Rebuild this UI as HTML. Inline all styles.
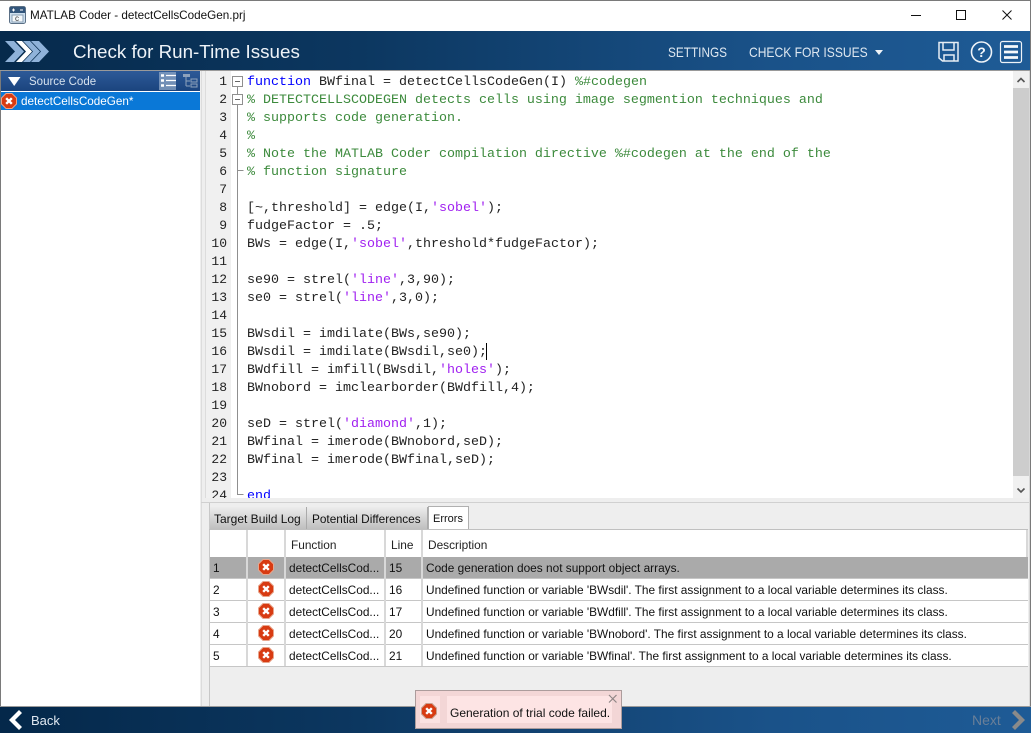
<!DOCTYPE html>
<html><head><meta charset="utf-8"><style>
html,body{margin:0;padding:0;background:#fff}
#r{position:relative;width:1031px;height:733px;overflow:hidden;background:#fff;font-family:"Liberation Sans",sans-serif;font-size:12px;color:#000}
#r div,#r svg{position:absolute}
.t{white-space:pre}
.ln{left:205px;width:22px;text-align:right;font-family:"Liberation Mono",monospace;font-size:13px;height:18px;line-height:18px;color:#222;white-space:pre;margin-top:1px}
.c{left:247px;font-family:"Liberation Mono",monospace;font-size:13.33px;height:18px;line-height:18px;white-space:pre;color:#222;margin-top:2px}
.k{color:#0000ff}.g{color:#3c8a3c}.s{color:#a020f0}
.cell{white-space:pre;height:22px;line-height:22px;font-size:11.86px;color:#111}
.hl{background:#c6c6c6;height:1px}
.v{background:#d8d8d8;width:2px}
</style></head><body><div id="r">
<!-- title bar -->
<div style="left:0;top:0;width:1031px;height:1px;background:#7a7a7a"></div>
<svg style="left:9px;top:6px" width="17" height="18" viewBox="0 0 17 18"><rect x=".5" y=".5" width="16" height="17" rx="2" fill="#cfe0ef" stroke="#5a6f85"/><rect x="1" y="1" width="15" height="6" fill="#33567c"/><path d="M3 4h3M4.500 2.500v3M11 4h3" stroke="#fff" stroke-width="1"/><rect x="3" y="9" width="11" height="7" fill="#f4f8fb" stroke="#8aa0b5"/><text x="6" y="15" font-size="8" font-family="Liberation Sans" fill="#333">c</text></svg>
<div class="t" style="left:30px;top:8px;font-size:11.7px;line-height:16px;color:#111">MATLAB Coder - detectCellsCodeGen.prj</div>
<svg style="left:905px;top:8px" width="120" height="16" viewBox="0 0 120 16"><path d="M6 7.500h10" stroke="#111" stroke-width="1"/><rect x="51.500" y="2.500" width="9" height="9" fill="none" stroke="#111"/><path d="M97.500 2.500l9 9M106.500 2.500l-9 9" stroke="#111" stroke-width="1"/></svg>
<!-- header -->
<div style="left:0;top:31px;width:1031px;height:39px;background:linear-gradient(90deg,#062a4c 0%,#0c3760 35%,#1a5289 75%,#1e5b96 100%)"></div>
<div style="left:0;top:70px;width:1031px;height:1px;background:#9a9a9a"></div>
<svg style="left:5px;top:40px" width="45" height="23" viewBox="0 0 45 23"><path d="M0 1h9l10 10.500L9 22H0l10-10.500z" fill="#8fb2d9"/><path d="M11 1h6l10 10.500L17 22h-6l10-10.500z" fill="#fff"/><path d="M18 1h7l10 10.500L25 22h-7l10-10.500z" fill="#8fb2d9"/><path d="M26 1h8l10 10.500L34 22h-8l10-10.500z" fill="#8fb2d9"/></svg>
<div class="t" style="left:73px;top:40px;font-size:18.8px;line-height:24px;color:#eef3f8">Check for Run-Time Issues</div>
<div class="t" style="left:668px;top:44px;font-size:14px;line-height:17px;color:#dfe8f1;transform:scaleX(.843);transform-origin:left">SETTINGS</div>
<div class="t" style="left:749px;top:44px;font-size:14px;line-height:17px;color:#dfe8f1;transform:scaleX(.862);transform-origin:left">CHECK FOR ISSUES</div>
<svg style="left:875px;top:50px" width="8" height="5" viewBox="0 0 8 5"><path d="M0 0h8L4 5z" fill="#eef3f8"/></svg>
<svg style="left:937px;top:40px" width="86" height="24" viewBox="0 0 86 24"><path d="M2 2.500h19v18.500H5.500L2 18z" fill="none" stroke="#e6edf4" stroke-width="1.500"/><path d="M6 3v7h11V3M7 21v-6h10v6" fill="none" stroke="#e6edf4" stroke-width="1.500"/><circle cx="44.500" cy="12" r="10" fill="none" stroke="#eef3f8" stroke-width="1.600"/><text x="44.500" y="17" text-anchor="middle" font-family="Liberation Sans" font-weight="bold" font-size="14" fill="#f2f6fa">?</text><rect x="63.500" y="1.500" width="21" height="21" rx="2" fill="none" stroke="#eef3f8" stroke-width="1.200"/><path d="M67 6.500h14M67 12h14M67 17.500h14" stroke="#f6f9fb" stroke-width="2.800"/></svg>
<!-- window borders -->
<div style="left:0;top:71px;width:1px;height:636px;background:#7a7a7a"></div>
<!-- left panel -->
<div style="left:1px;top:71px;width:200px;height:20px;background:linear-gradient(180deg,#2d5a98,#1b447e)"></div>
<svg style="left:8px;top:77px" width="13" height="9" viewBox="0 0 13 9"><path d="M0 0h12.500L6.200 9z" fill="#fff"/></svg>
<div class="t" style="left:29px;top:75px;line-height:15px;font-size:11.5px;color:#d7e2ee">Source Code</div>
<div style="left:159px;top:72px;width:17px;height:18px;background:#8ea6c6;opacity:.75"></div>
<svg style="left:160px;top:73px" width="17" height="16" viewBox="0 0 17 16"><path d="M1 2.500h3M1 7.500h3M1 12.500h3" stroke="#fff" stroke-width="2.500"/><path d="M6 2.500h10M6 7.500h10M6 12.500h10" stroke="#fff" stroke-width="1.200"/></svg>
<svg style="left:183px;top:73px" width="15" height="16" viewBox="0 0 15 16"><path d="M0 1h7v3H0z" fill="#8ea2bc"/><path d="M3 4v9M3 8h4M3 13h4" stroke="#8ea2bc"/><rect x="8" y="6" width="6" height="3" fill="none" stroke="#8ea2bc"/><rect x="8" y="11" width="6" height="3" fill="none" stroke="#8ea2bc"/></svg>
<div style="left:1px;top:92px;width:199px;height:18px;background:#0a78d7"></div>
<svg style="left:1px;top:93px" width="16" height="16" viewBox="0 0 16 16"><path d="M5 .5h6L15.500 5v6L11 15.500H5L.5 11V5z" fill="#d83b12" stroke="#f2a184"/><path d="M5.200 5.200l5.600 5.600M10.800 5.200l-5.600 5.600" stroke="#fff" stroke-width="2.400"/></svg>
<div class="t" style="left:21px;top:94px;line-height:16px;font-size:11.7px;color:#fff">detectCellsCodeGen*</div>
<!-- splitter -->
<div style="left:200px;top:71px;width:10px;height:636px;background:#eeeeee"></div>
<div style="left:201px;top:71px;width:1px;height:636px;background:#dcdcdc"></div>
<div style="left:205px;top:71px;width:1px;height:427px;background:#dcdcdc"></div>
<!-- editor -->
<div style="left:206px;top:71px;width:25px;height:427px;background:#f0f0f0"></div>
<div style="left:231px;top:71px;width:782px;height:427px;background:#fff;overflow:hidden"></div>
<div style="left:1013px;top:71px;width:16px;height:427px;background:#f0f0f0"></div>
<div style="left:1013px;top:88px;width:16px;height:388px;background:#cdcdcd"></div>
<svg style="left:1013px;top:71px" width="16" height="427" viewBox="0 0 16 427"><path d="M4.500 11l3.500-3.500 3.500 3.500" fill="none" stroke="#555" stroke-width="1.600"/><path d="M4.500 417.500l3.500 3.500 3.500-3.500" fill="none" stroke="#555" stroke-width="1.600"/></svg>
<svg style="left:231px;top:71px" width="16" height="427" viewBox="0 0 16 427"><rect x="1.500" y="5.500" width="10" height="10" fill="#fff" stroke="#8f8f8f"/><path d="M4 10.500h5" stroke="#666"/><rect x="1.500" y="23.500" width="10" height="10" fill="#fff" stroke="#8f8f8f"/><path d="M4 28.500h5" stroke="#666"/><path d="M6.500 15.500v8M6.500 33.500v66h6M6.500 99.500V423.500h6" fill="none" stroke="#8f8f8f"/></svg>
<div style="left:205px;top:71px;width:808px;height:427px;overflow:hidden">
<div style="left:-205px;top:-71px;width:1031px;height:733px">
<div class="ln" style="top:72px">1</div><div class="c" style="top:72px"><span class="k">function</span> BWfinal = detectCellsCodeGen(I) <span class="g">%#codegen</span></div>
<div class="ln" style="top:90px">2</div><div class="c g" style="top:90px">% DETECTCELLSCODEGEN detects cells using image segmention techniques and</div>
<div class="ln" style="top:108px">3</div><div class="c g" style="top:108px">% supports code generation.</div>
<div class="ln" style="top:126px">4</div><div class="c g" style="top:126px">%</div>
<div class="ln" style="top:144px">5</div><div class="c g" style="top:144px">% Note the MATLAB Coder compilation directive %#codegen at the end of the</div>
<div class="ln" style="top:162px">6</div><div class="c g" style="top:162px">% function signature</div>
<div class="ln" style="top:180px">7</div>
<div class="ln" style="top:198px">8</div><div class="c" style="top:198px">[~,threshold] = edge(I,<span class="s">'sobel'</span>);</div>
<div class="ln" style="top:216px">9</div><div class="c" style="top:216px">fudgeFactor = .5;</div>
<div class="ln" style="top:234px">10</div><div class="c" style="top:234px">BWs = edge(I,<span class="s">'sobel'</span>,threshold*fudgeFactor);</div>
<div class="ln" style="top:252px">11</div>
<div class="ln" style="top:270px">12</div><div class="c" style="top:270px">se90 = strel(<span class="s">'line'</span>,3,90);</div>
<div class="ln" style="top:288px">13</div><div class="c" style="top:288px">se0 = strel(<span class="s">'line'</span>,3,0);</div>
<div class="ln" style="top:306px">14</div>
<div class="ln" style="top:324px">15</div><div class="c" style="top:324px">BWsdil = imdilate(BWs,se90);</div>
<div class="ln" style="top:342px">16</div><div class="c" style="top:342px">BWsdil = imdilate(BWsdil,se0);</div>
<div style="left:486px;top:343px;width:1px;height:17px;background:#000"></div>
<div class="ln" style="top:360px">17</div><div class="c" style="top:360px">BWdfill = imfill(BWsdil,<span class="s">'holes'</span>);</div>
<div class="ln" style="top:378px">18</div><div class="c" style="top:378px">BWnobord = imclearborder(BWdfill,4);</div>
<div class="ln" style="top:396px">19</div>
<div class="ln" style="top:414px">20</div><div class="c" style="top:414px">seD = strel(<span class="s">'diamond'</span>,1);</div>
<div class="ln" style="top:432px">21</div><div class="c" style="top:432px">BWfinal = imerode(BWnobord,seD);</div>
<div class="ln" style="top:450px">22</div><div class="c" style="top:450px">BWfinal = imerode(BWfinal,seD);</div>
<div class="ln" style="top:468px">23</div>
<div class="ln" style="top:486px">24</div><div class="c k" style="top:486px">end</div>
</div></div>
<!-- lower panel -->
<div style="left:206px;top:498px;width:825px;height:209px;background:#eeeeee"></div>
<div style="left:201px;top:502px;width:830px;height:1px;background:#d0d0d0"></div>
<div style="left:209px;top:503px;width:1px;height:204px;background:#c8c8c8"></div>
<div style="left:1029px;top:71px;width:1px;height:636px;background:#d8d8d8"></div>
<div style="left:1030px;top:0;width:1px;height:707px;background:#7a7a7a"></div>
<!-- tabs -->
<div style="left:210px;top:507px;width:96px;height:23px;background:linear-gradient(180deg,#ececec,#bdbdbd);border-right:1px solid #aaa"></div>
<div style="left:307px;top:507px;width:120px;height:23px;background:linear-gradient(180deg,#ececec,#bdbdbd);border-right:1px solid #aaa"></div>
<div style="left:428px;top:506px;width:41px;height:24px;background:#fff;border:1px solid #b0b0b0;border-bottom:none;box-sizing:border-box"></div>
<div class="t" style="left:214px;top:511px;line-height:16px;color:#111">Target Build Log</div>
<div class="t" style="left:312px;top:511px;line-height:16px;font-size:11.8px;color:#111">Potential Differences</div>
<div class="t" style="left:433px;top:511px;line-height:16px;font-size:11px;color:#111">Errors</div>
<div style="left:209px;top:529px;width:819px;height:1px;background:#c0c0c0"></div>
<!-- table -->
<div style="left:210px;top:530px;width:818px;height:136px;background:#fff"></div>
<div style="left:210px;top:557px;width:818px;height:21px;background:#aaaaaa"></div>
<div class="hl" style="left:210px;top:578px;width:818px"></div>
<div class="hl" style="left:210px;top:600px;width:818px"></div>
<div class="hl" style="left:210px;top:622px;width:818px"></div>
<div class="hl" style="left:210px;top:644px;width:818px"></div>
<div class="hl" style="left:210px;top:666px;width:818px"></div>
<div class="v" style="left:246px;top:530px;height:136px"></div>
<div class="v" style="left:284px;top:530px;height:136px"></div>
<div class="v" style="left:384px;top:530px;height:136px"></div>
<div class="v" style="left:421px;top:530px;height:136px"></div>
<div class="v" style="left:1026px;top:530px;height:27px"></div>
<div class="cell" style="left:291px;top:534px;color:#222">Function</div>
<div class="cell" style="left:391px;top:534px;color:#222">Line</div>
<div class="cell" style="left:428px;top:534px;color:#222">Description</div>
<div class="cell" style="left:213px;top:557px">1</div><div class="cell" style="left:289px;top:557px">detectCellsCod...</div><div class="cell" style="left:389px;top:557px">15</div><div class="cell" style="left:426px;top:557px">Code generation does not support object arrays.</div>
<div class="cell" style="left:213px;top:579px">2</div><div class="cell" style="left:289px;top:579px">detectCellsCod...</div><div class="cell" style="left:389px;top:579px">16</div><div class="cell" style="left:426px;top:579px">Undefined function or variable 'BWsdil'. The first assignment to a local variable determines its class.</div>
<div class="cell" style="left:213px;top:601px">3</div><div class="cell" style="left:289px;top:601px">detectCellsCod...</div><div class="cell" style="left:389px;top:601px">17</div><div class="cell" style="left:426px;top:601px">Undefined function or variable 'BWdfill'. The first assignment to a local variable determines its class.</div>
<div class="cell" style="left:213px;top:623px">4</div><div class="cell" style="left:289px;top:623px">detectCellsCod...</div><div class="cell" style="left:389px;top:623px">20</div><div class="cell" style="left:426px;top:623px">Undefined function or variable 'BWnobord'. The first assignment to a local variable determines its class.</div>
<div class="cell" style="left:213px;top:645px">5</div><div class="cell" style="left:289px;top:645px">detectCellsCod...</div><div class="cell" style="left:389px;top:645px">21</div><div class="cell" style="left:426px;top:645px">Undefined function or variable 'BWfinal'. The first assignment to a local variable determines its class.</div>
<svg style="left:258px;top:559px" width="16" height="16" viewBox="0 0 16 16"><path d="M5 .5h6L15.500 5v6L11 15.500H5L.5 11V5z" fill="#d83b12" stroke="#e8a58c"/><path d="M5.200 5.200l5.600 5.600M10.800 5.200l-5.600 5.600" stroke="#fff" stroke-width="2.400"/></svg>
<svg style="left:258px;top:581px" width="16" height="16" viewBox="0 0 16 16"><path d="M5 .5h6L15.500 5v6L11 15.500H5L.5 11V5z" fill="#d83b12" stroke="#e8a58c"/><path d="M5.200 5.200l5.600 5.600M10.800 5.200l-5.600 5.600" stroke="#fff" stroke-width="2.400"/></svg>
<svg style="left:258px;top:603px" width="16" height="16" viewBox="0 0 16 16"><path d="M5 .5h6L15.500 5v6L11 15.500H5L.5 11V5z" fill="#d83b12" stroke="#e8a58c"/><path d="M5.200 5.200l5.600 5.600M10.800 5.200l-5.600 5.600" stroke="#fff" stroke-width="2.400"/></svg>
<svg style="left:258px;top:625px" width="16" height="16" viewBox="0 0 16 16"><path d="M5 .5h6L15.500 5v6L11 15.500H5L.5 11V5z" fill="#d83b12" stroke="#e8a58c"/><path d="M5.200 5.200l5.600 5.600M10.800 5.200l-5.600 5.600" stroke="#fff" stroke-width="2.400"/></svg>
<svg style="left:258px;top:647px" width="16" height="16" viewBox="0 0 16 16"><path d="M5 .5h6L15.500 5v6L11 15.500H5L.5 11V5z" fill="#d83b12" stroke="#e8a58c"/><path d="M5.200 5.200l5.600 5.600M10.800 5.200l-5.600 5.600" stroke="#fff" stroke-width="2.400"/></svg>
<!-- footer -->
<div style="left:0;top:706px;width:1031px;height:1px;background:#9a9a9a"></div>
<div style="left:0;top:707px;width:1031px;height:26px;background:linear-gradient(90deg,#04284a 0%,#0c3760 35%,#1a5289 75%,#1e5b96 100%)"></div>
<svg style="left:8px;top:710px" width="15" height="20" viewBox="0 0 15 20"><path d="M11 0l3 3-7 7 7 7-3 3-10-10z" fill="#fff"/></svg>
<div class="t" style="left:31px;top:712px;font-size:13px;line-height:17px;color:#dfe8f1">Back</div>
<div class="t" style="left:972px;top:712px;font-size:14px;line-height:17px;color:#6a7f98">Next</div>
<svg style="left:1011px;top:710px" width="15" height="20" viewBox="0 0 15 20"><path d="M4 0l-3 3 7 7-7 7 3 3 10-10z" fill="#8a8a8a"/></svg>
<!-- toast -->
<div style="left:415px;top:690px;width:207px;height:39px;box-sizing:border-box;background:#f3d6d6;border:1px solid #ac9c9c"></div>
<div style="left:420px;top:696px;width:20px;height:27px;background:#fbe2e2"></div>
<div style="left:447px;top:696px;width:165px;height:27px;background:#fde4e4"></div>
<svg style="left:421px;top:703px" width="16" height="16" viewBox="0 0 16 16"><path d="M5 .5h6L15.500 5v6L11 15.500H5L.5 11V5z" fill="#d83b12" stroke="#c9a090"/><path d="M5.200 5.200l5.600 5.600M10.800 5.200l-5.600 5.600" stroke="#fff" stroke-width="2.400"/></svg>
<div class="t" style="left:450px;top:705px;line-height:16px;color:#111">Generation of trial code failed.</div>
<svg style="left:608px;top:694px" width="10" height="10" viewBox="0 0 10 10"><path d="M1 1l7.500 7.500M8.500 1L1 8.500" stroke="#8f8585" stroke-width="1.200"/></svg>
</div></body></html>
